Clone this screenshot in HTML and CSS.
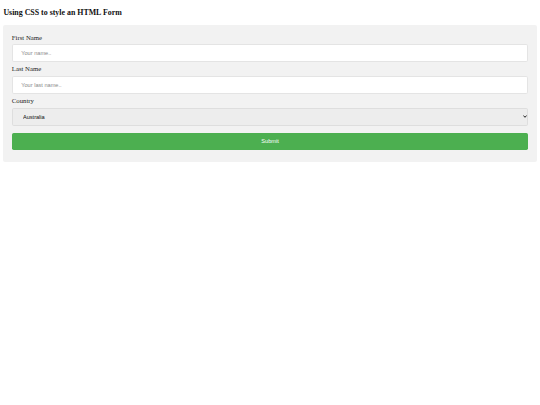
FILE: index.html
```html
<!DOCTYPE html>
<html>
<head>
<meta charset="utf-8">
<title>Form</title>
<link rel="stylesheet" href="styles.css">
</head>
<body>
<h3 class="page-title">Using CSS to style an HTML Form</h3>
<div class="form-card">
  <form class="form">
    <label class="field-label" for="fname">First Name</label>
    <input class="text-input" type="text" id="fname" name="firstname" placeholder="Your name..">
    <label class="field-label" for="lname">Last Name</label>
    <input class="text-input" type="text" id="lname" name="lastname" placeholder="Your last name..">
    <label class="field-label" for="country">Country</label>
    <div class="select-wrap">
      <select class="select-input" id="country" name="country">
        <option value="australia">Australia</option>
        <option value="canada">Canada</option>
        <option value="usa">USA</option>
      </select>
      <svg class="select-arrow" width="4" height="3" viewBox="0 0 4 3" aria-hidden="true">
        <path d="M0.4 0.5 L2 2.3 L3.6 0.5" fill="none" stroke="#222" stroke-width="1"/>
      </svg>
    </div>
    <input class="submit-btn" type="submit" value="Submit">
  </form>
</div>
</body>
</html>
```

FILE: styles.css
```css
html {
  background: #ffffff;
}
body {
  margin: 3.375px;
  font-family: "Liberation Serif", "Times New Roman", serif;
  font-size: 6.75px;
  color: #000;
}
.page-title {
  font-size: 7.9px;
  font-weight: bold;
  margin: 4.9px 0 7.9px;
  color: #111;
}
.form-card {
  border-radius: 2.1px;
  background-color: #f2f2f2;
  padding: 8.44px;
}
.form {
  margin: 0;
}
.field-label {
  display: inline;
  font-size: 6.75px;
  color: #222;
}
.text-input,
.select-input {
  width: 100%;
  padding: 5.06px 8.44px;
  margin: 3.375px 0;
  display: inline-block;
  border: 1px solid #e4e4e4;
  border-radius: 1.7px;
  box-sizing: border-box;
  font-family: "Liberation Sans", Arial, sans-serif;
  font-size: 5.625px;
  background: #ffffff;
  color: #000;
  outline: none;
}
.text-input::placeholder {
  color: #8a8a8a;
}
.select-wrap {
  position: relative;
}
.select-input {
  -webkit-appearance: none;
  appearance: none;
  display: block;
  padding-left: 10.1px;
  background-color: #ededed;
  border-color: #dedede;
  color: #111;
}
.select-arrow {
  position: absolute;
  right: 1.6px;
  top: 50%;
  margin-top: -1.5px;
  pointer-events: none;
}
.submit-btn {
  width: 100%;
  background-color: #4CAF50;
  color: white;
  padding: 5.9px 8.44px;
  margin: 3.375px 0;
  border: none;
  border-radius: 1.7px;
  cursor: pointer;
  font-family: "Liberation Sans", Arial, sans-serif;
  font-size: 5.625px;
  display: inline-block;
}
```
